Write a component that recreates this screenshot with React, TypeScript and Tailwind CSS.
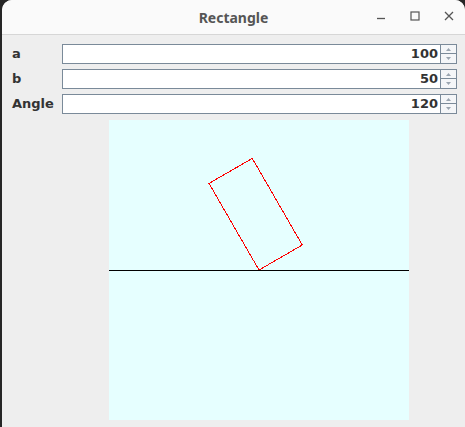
import React from 'react'

const fields = [
  { label: 'a', value: 100 },
  { label: 'b', value: 50 },
  { label: 'Angle', value: 120 },
]

function Spinner({ value }: { value: number }) {
  return (
    <div className="flex h-[20px] flex-1">
      <div className="flex flex-1 items-center justify-end border border-[#7a8a99] bg-white pr-[2px] text-[13px] font-bold text-[#333]">
        {value}
      </div>
      <div className="flex w-[16px] flex-col">
        <div className="flex h-[10px] items-center justify-center border border-l-0 border-[#7a8a99] bg-[#f4f6f8]">
          <svg width="5" height="3" viewBox="0 0 5 3">
            <path d="M2.5 0 L5 3 L0 3 Z" fill="#9aa5b0" />
          </svg>
        </div>
        <div className="flex h-[10px] items-center justify-center border border-l-0 border-t-0 border-[#7a8a99] bg-[#f4f6f8]">
          <svg width="5" height="3" viewBox="0 0 5 3">
            <path d="M0 0 L5 0 L2.5 3 Z" fill="#9aa5b0" />
          </svg>
        </div>
      </div>
    </div>
  )
}

export default function App() {
  return (
    <div className="h-[427px] w-[465px] overflow-hidden bg-[#262626] pl-[2px] font-['DejaVu_Sans',sans-serif]">
      <div className="flex h-full flex-col rounded-t-[10px] bg-[#eeeeee]">
        <div className="relative flex h-[35px] shrink-0 items-center justify-center rounded-t-[10px] border-b border-[#d6d6d6] bg-[#fafafa]">
          <span className="text-[14px] font-bold text-[#555] font-['Noto_Sans',sans-serif]">Rectangle</span>
          <div className="absolute right-[10px] top-0 flex h-full items-center gap-[22px] pb-[3px] text-[#555]">
            <svg width="12" height="12" viewBox="0 0 12 12">
              <path d="M2 8.5 H10" stroke="#555" strokeWidth="1.3" />
            </svg>
            <svg width="12" height="12" viewBox="0 0 12 12">
              <rect x="2" y="2" width="8" height="8" fill="none" stroke="#555" strokeWidth="1.2" />
            </svg>
            <svg width="12" height="12" viewBox="0 0 12 12">
              <path d="M2 2 L10 10 M10 2 L2 10" stroke="#555" strokeWidth="1.3" />
            </svg>
          </div>
        </div>

        <div className="flex flex-col gap-[5px] pl-[10px] pr-[8px] pt-[9px]">
          {fields.map((f) => (
            <div key={f.label} className="flex items-center">
              <div className="w-[50px] text-[13px] font-bold text-[#333]">{f.label}</div>
              <Spinner value={f.value} />
            </div>
          ))}
        </div>

        <div className="ml-[107px] mt-[6px] h-[300px] w-[300px] bg-[#e6ffff]">
          <svg width="300" height="300" viewBox="0 0 300 300">
            <line x1="0" y1="150.5" x2="300" y2="150.5" stroke="#000" strokeWidth="1" shapeRendering="crispEdges" />
            <polygon
              points="150,150 193.3,125 143.3,38.4 100,63.4"
              fill="none"
              stroke="#ff0000"
              strokeWidth="1"
              shapeRendering="crispEdges"
            />
          </svg>
        </div>
      </div>
    </div>
  )
}
